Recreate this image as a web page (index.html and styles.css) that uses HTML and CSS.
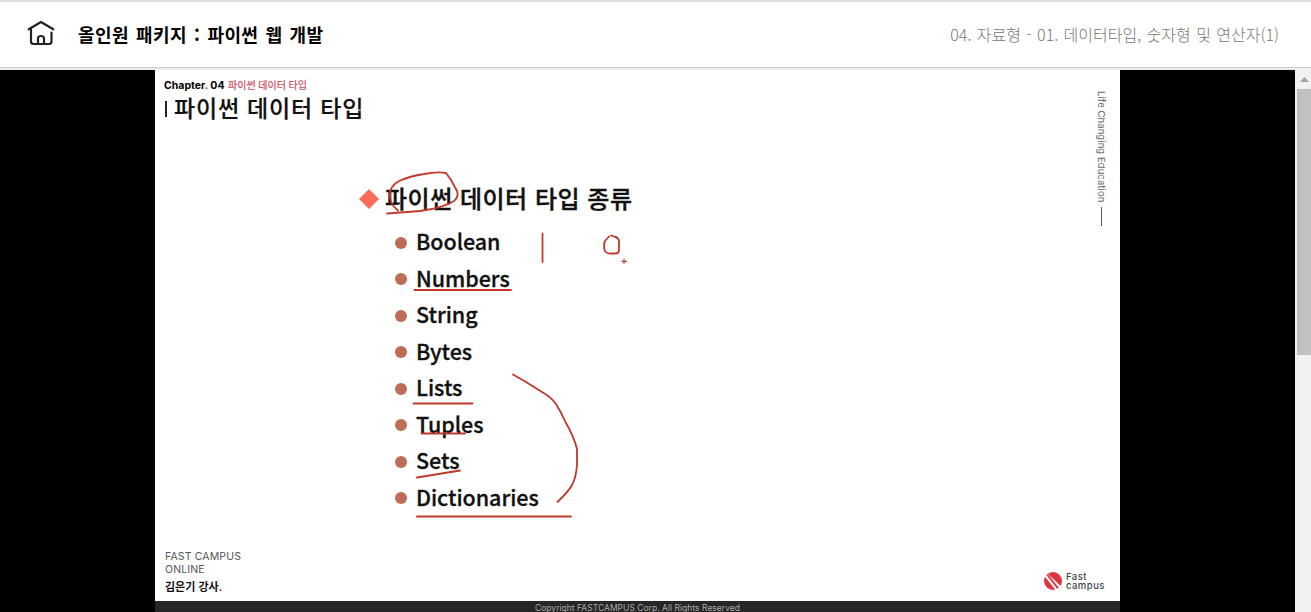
FILE: index.html
```html
<!DOCTYPE html>
<html lang="ko">
<head>
<meta charset="utf-8">
<title>올인원 패키지 : 파이썬 웹 개발</title>
<link rel="stylesheet" href="styles.css">
</head>
<body>
<header class="topbar">
  <svg class="home" width="28" height="26" viewBox="0 0 28 26" fill="none" stroke="#222" stroke-width="2.200" stroke-linecap="round" stroke-linejoin="round">
    <path d="M1.700 9.300 14 2 26.300 9.300M4 9.500V21.500Q4 24 6.500 24H22Q24.500 24 24.500 21.500V12.500M11 24V18.500Q11 16 14 16Q17 16 17 18.500V24"/>
  </svg>
  <h1 class="course">올인원 패키지 : 파이썬 웹 개발</h1>
  <p class="lesson">04. 자료형 - 01. 데이터타입, 숫자형 및 연산자(1)</p>
</header>
<div class="viewer">
  <main class="stage">
    <section class="slide">
      <div class="slide-head">
        <div>
          <p class="chapter">Chapter<i>.</i> 04 <span>파이썬 데이터 타입</span></p>
          <h2 class="slide-title"><b class="bar"></b>파이썬 데이터 타입</h2>
        </div>
        <p class="motto">Life Changing Education<b class="rule"></b></p>
      </div>
      <div class="content">
        <h3 class="topic"><svg width="20" height="20"><path d="M10 0 20 10 10 20 0 10Z" fill="#ff6b5b"/></svg><span>파이썬 데이터 타입 종류</span></h3>
        <ul class="types">
          <li><span>Boolean</span></li>
          <li><span>Numbers</span></li>
          <li><span>String</span></li>
          <li><span>Bytes</span></li>
          <li><span>Lists</span></li>
          <li><span>Tuples</span></li>
          <li><span>Sets</span></li>
          <li><span>Dictionaries</span></li>
        </ul>
      </div>
      <div class="slide-foot">
        <div class="org">
          <p>FAST CAMPUS</p>
          <p>ONLINE</p>
          <p class="teacher">김은기 강사<i>.</i></p>
        </div>
        <div class="brand">
          <svg width="18" height="18" viewBox="0 0 18 18"><circle cx="9" cy="9" r="9" fill="#df3540"/><path d="M3 1 17 14.500 15.500 16.500ZM0 3.500 2 2.500 14 18 11.500 18Z" fill="#fff"/></svg>
          <div><p>Fast</p><p>campus</p></div>
        </div>
      </div>
      <p class="copyright">Copyright FASTCAMPUS Corp. All Rights Reserved</p>
      <svg class="ink" viewBox="155 70 965 542" fill="none" stroke="#c0392b" stroke-width="1.800" stroke-linecap="round" stroke-linejoin="round">
        <path d="M398 210.500C392 206 389 199 390 192C391 187 394 184 399 181Q410 176 424 174Q437 171.500 446 173L451 180 457 191Q459 197 454 201Q443 208 420 211Q404 212 387 213.500"/>
        <path d="M542.500 233.500V262M609 236.500 605 241Q603.500 244 604.500 250Q606 253.500 610 253.500H616Q619 253 619 250V241Q618 237 614 236.500L611 235.500"/>
        <path stroke-width="1.200" d="M624 259V263.500M622 261.300H626.500"/>
        <path d="M414.500 290H511M413.500 403.500H472.500M421.500 433.500H465M417 477.500 460 470.500M417 516.500H571"/>
        <path d="M513 374.500 526 382 542 392Q551 397 556 404Q561 412 566 423Q574 437 577 449V465Q576 478 572 485Q569 491 557.500 502"/>
      </svg>
    </section>
  </main>
  <div class="scrollbar">
    <svg width="16" height="21"><path d="M4 14 8.500 9 13 14Z" fill="#a3a3a3"/></svg>
    <div class="thumb"></div>
  </div>
</div>
</body>
</html>
```
FILE: styles.css
```css
* { box-sizing: border-box; margin: 0; padding: 0; }
body { height: 612px; overflow: hidden; background: #fff; font-family: "Noto Sans CJK KR", sans-serif; color: #000; }
i { font-style: normal; color: #d9394a; }
.topbar { display: flex; align-items: center; height: 68px; padding: 0 32px 0 27px; border-top: 2px solid #dcdce1; border-bottom: 1px solid #ccc; }
.home { margin-top: -3px; }
.course { margin: -2px 0 0 23px; font-size: 18px; font-weight: 700; line-height: 26px; letter-spacing: .4px; word-spacing: 1.700px; white-space: nowrap; }
.lesson { margin: -1px 0 0 auto; font-size: 16px; font-weight: 300; color: #777; line-height: 24px; word-spacing: .9px; white-space: nowrap; }
.viewer { display: flex; height: 544px; }
.stage { flex: 1; padding-left: 155px; background: #000; border-top: 2px solid #ececec; }
.slide { position: relative; display: flex; flex-direction: column; width: 965px; height: 542px; background: #fff; }
.slide-head { display: flex; justify-content: space-between; height: 112px; padding: 8px 13px 0 9px; }
.chapter { font: 700 10.500px/15px Inter, "Noto Sans CJK KR", sans-serif; white-space: nowrap; }
.chapter span { margin-left: 1px; color: #d05060; font-size: 10px; font-weight: 500; }
.slide-title { display: flex; align-items: center; gap: 7px; margin-top: -2px; font-size: 23px; font-weight: 500; line-height: 32px; letter-spacing: .8px; color: #111; white-space: nowrap; -webkit-text-stroke: .2px #111; }
.bar { width: 2px; height: 16px; margin: 4px 0 0 1px; background: #222; }
.motto { display: flex; align-items: center; gap: 5px; writing-mode: vertical-rl; height: 149px; padding-top: 13px; font: 400 9.500px/12px Inter, sans-serif; letter-spacing: .08px; color: #666; white-space: nowrap; }
.rule { flex: none; width: 1px; height: 19px; background: #555; }
.content { flex: 1; padding-left: 204px; }
.topic { display: flex; align-items: center; gap: 6px; height: 34px; font-size: 24px; font-weight: 500; letter-spacing: .5px; white-space: nowrap; color: #111; -webkit-text-stroke: .4px #111; }
.topic span { margin-top: -4px; }
.types { margin-top: 8.500px; padding-left: 35.500px; list-style: none; }
.types li { display: flex; align-items: center; gap: 9.500px; height: 36.500px; font-size: 21.500px; font-weight: 500; line-height: 36px; color: #111; -webkit-text-stroke: .3px #111; }
.types span { margin-top: -3px; letter-spacing: -.05px; }
.types li::before { content: ""; width: 12px; height: 12px; border-radius: 50%; background: #bf6c56; }
.slide-foot { display: flex; justify-content: space-between; height: 51px; padding: 1px 15px 0 10px; }
.org { font: 400 10.500px/12.500px Inter, "Noto Sans CJK KR", sans-serif; letter-spacing: .15px; color: #555; }
.teacher { margin-top: 2px; font: 700 11px/16px "Noto Sans CJK KR", sans-serif; letter-spacing: 0; color: #111; }
.brand { display: flex; gap: 4px; padding-top: 21px; font: 500 10px/9px Inter, sans-serif; color: #444; }
.brand p { height: 9px; letter-spacing: .5px; font-size: 9.500px; }
.copyright { height: 11px; overflow: hidden; padding-top: 1px; background: #262626; color: #aaa; text-align: center; font: 400 8.500px/12px Inter, sans-serif; letter-spacing: .02px; }
.ink { position: absolute; inset: 0; width: 965px; height: 542px; }
.scrollbar { width: 16px; padding-left: 2px; background: #f1f1f1; }
.scrollbar svg { display: block; margin-left: -1px; }
.thumb { height: 266px; background: #c1c1c1; }
```
